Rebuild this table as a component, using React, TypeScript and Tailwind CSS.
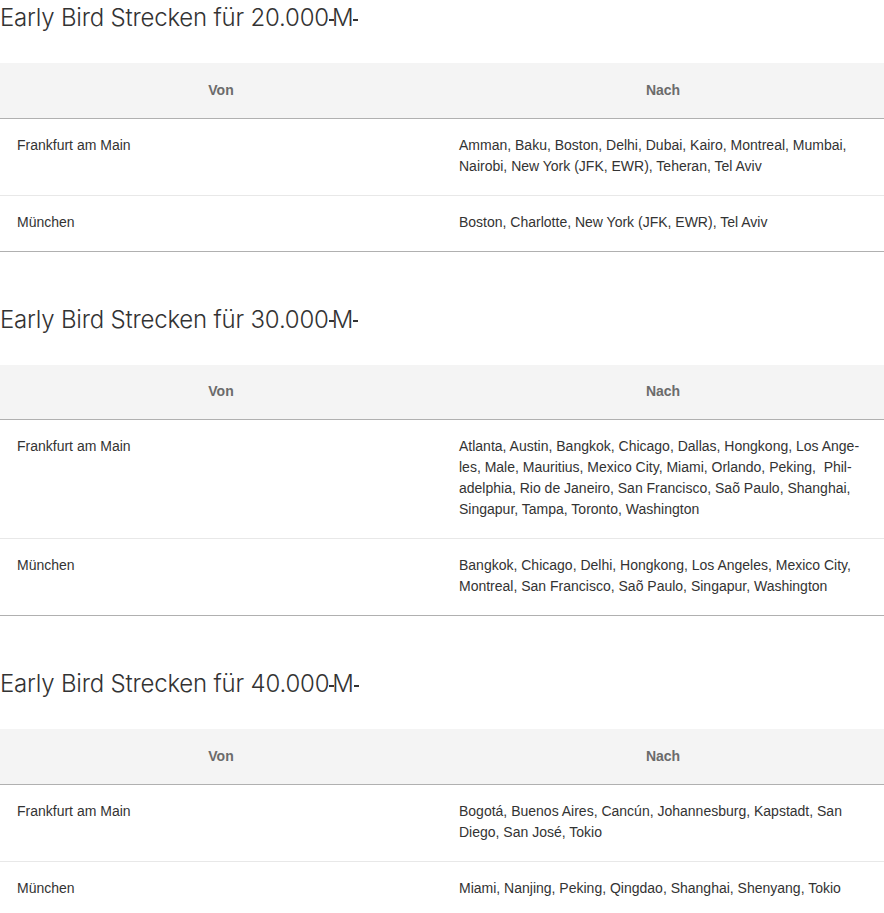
import React from "react";

type Row = { from: string; to: React.ReactNode };
type Section = { miles: string; rows: Row[] };

const sections: Section[] = [
  {
    miles: "20.000",
    rows: [
      {
        from: "Frankfurt am Main",
        to: "Amman, Baku, Boston, Delhi, Dubai, Kairo, Montreal, Mumbai, Nairobi, New York (JFK, EWR), Teheran, Tel Aviv",
      },
      { from: "München", to: "Boston, Charlotte, New York (JFK, EWR), Tel Aviv" },
    ],
  },
  {
    miles: "30.000",
    rows: [
      {
        from: "Frankfurt am Main",
        to: "Atlanta, Austin, Bangkok, Chicago, Dallas, Hongkong, Los Ange\u00ADles, Male, Mauritius, Mexico City, Miami, Orlando, Peking, \u00A0Phil\u00ADadelphia, Rio de Janeiro, San Francisco, Saõ Paulo, Shanghai, Singapur, Tampa, Toronto, Washington",
      },
      {
        from: "München",
        to: "Bangkok, Chicago, Delhi, Hongkong, Los Angeles, Mexico City, Montreal, San Francisco, Saõ Paulo, Singapur, Washington",
      },
    ],
  },
  {
    miles: "40.000",
    rows: [
      {
        from: "Frankfurt am Main",
        to: "Bogotá, Buenos Aires, Cancún, Johannesburg, Kapstadt, San Diego, San José, Tokio",
      },
      { from: "München", to: "Miami, Nanjing, Peking, Qingdao, Shanghai, Shenyang, Tokio" },
    ],
  },
];

function MilesSymbol() {
  return (
    <span className="relative ml-[1px] inline-block px-[2px]">
      <span className="absolute left-[-1px] top-[52%] h-[2px] w-[5px] bg-[#333]" />
      M
      <span className="absolute right-[-3px] top-[52%] h-[2px] w-[5px] bg-[#333]" />
    </span>
  );
}

export default function App() {
  return (
    <div
      className="w-[884px] bg-white text-[#333]"
      style={{ fontFamily: '"Liberation Sans", Arial, sans-serif' }}
      lang="de"
    >
      {sections.map((s, i) => (
        <section key={s.miles} className={i === 0 ? "" : "mt-[50px]"}>
          <h2
            className="mb-[27px] h-[36px] text-[24px] font-light leading-[36px] tracking-[-0.2px] text-[#333]"
            style={{ fontFamily: "Inter, 'Liberation Sans', sans-serif" }}
          >
            Early Bird Strecken für {s.miles}
            <MilesSymbol />
          </h2>
          <table className="w-full table-fixed border-collapse text-[14px] leading-[21px]">
            <thead>
              <tr className="h-[55px] border-b border-[#b0b0b0] bg-[#f4f4f4]">
                <th className="w-1/2 px-[17px] text-center font-bold text-[#6b6b6b]">Von</th>
                <th className="w-1/2 px-[17px] text-center font-bold text-[#6b6b6b]">Nach</th>
              </tr>
            </thead>
            <tbody>
              {s.rows.map((r, j) => (
                <tr
                  key={j}
                  className={
                    j === s.rows.length - 1
                      ? "border-b border-[#b0b0b0]"
                      : "border-b border-[#e8e8e8]"
                  }
                >
                  <td className="px-[17px] pt-[16px] pb-[18px] align-top">{r.from}</td>
                  <td className="px-[17px] pt-[16px] pb-[18px] align-top">{r.to}</td>
                </tr>
              ))}
            </tbody>
          </table>
        </section>
      ))}
    </div>
  );
}
